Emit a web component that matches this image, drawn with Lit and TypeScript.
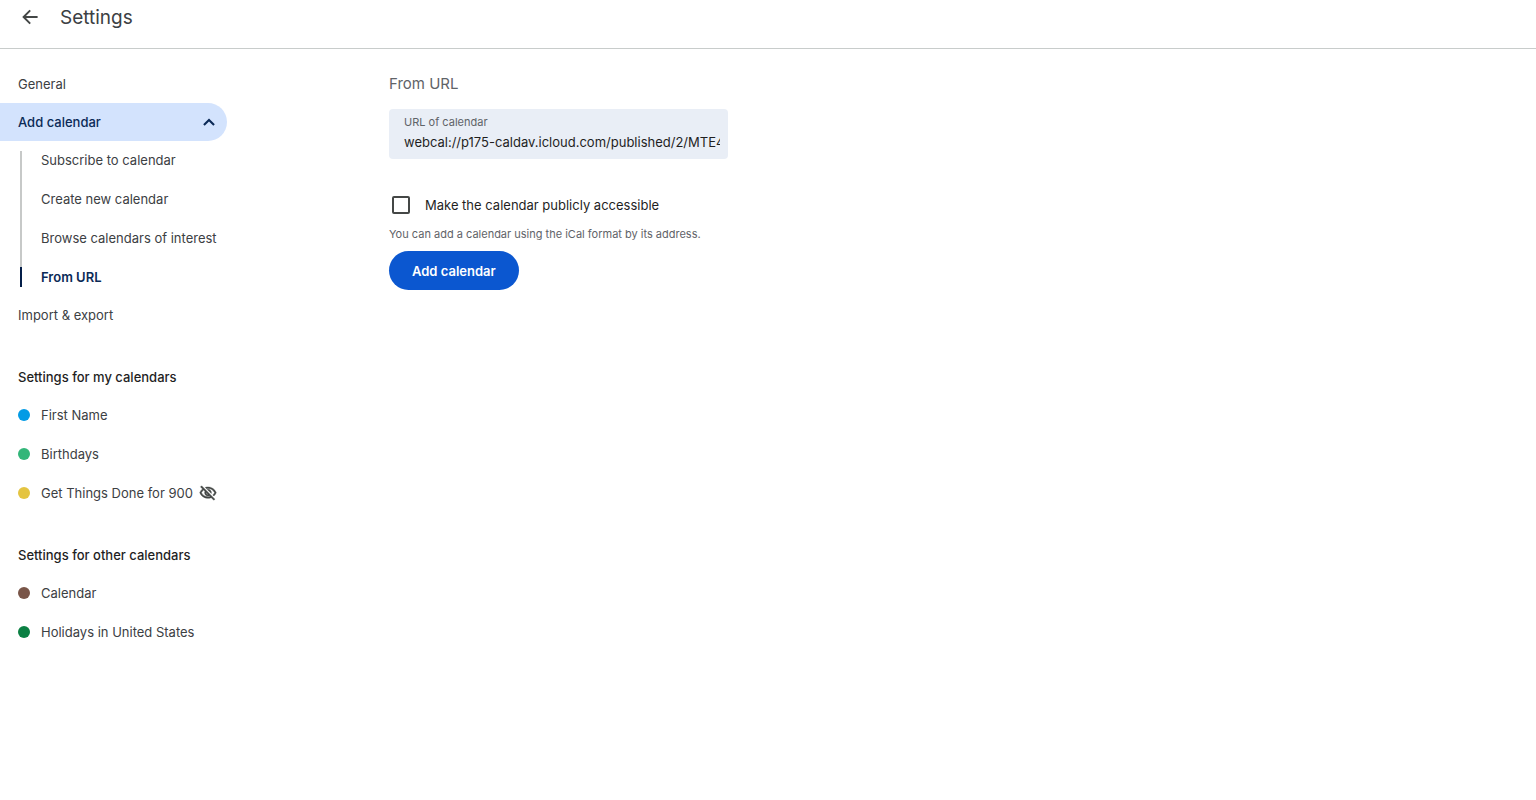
import { LitElement, html, css } from "lit";
import { customElement, state } from "lit/decorators.js";
import { classMap } from "lit/directives/class-map.js";

interface Calendar {
  name: string;
  color: string;
  hidden?: boolean;
}

const ADD_PAGES = ["Subscribe to calendar", "Create new calendar", "Browse calendars of interest", "From URL"];

const MY_CALENDARS: Calendar[] = [
  { name: "First Name", color: "#039be5" },
  { name: "Birthdays", color: "#33b679" },
  { name: "Get Things Done for 900", color: "#e4c441", hidden: true },
];

const OTHER_CALENDARS: Calendar[] = [
  { name: "Calendar", color: "#795548" },
  { name: "Holidays in United States", color: "#0b8043" },
];

@customElement("app-root")
export class AppRoot extends LitElement {
  static styles = css`
    :host {
      display: block;
      min-height: 100vh;
      background: #fff;
      color: #3c4043;
      font-family: Inter, Roboto, sans-serif;
      font-size: 13px;
      line-height: 20px;
    }
    * { box-sizing: border-box; }
    h1, h2, h3, p, ul { margin: 0; padding: 0; font-weight: 400; }
    ul { list-style: none; }
    a { color: inherit; text-decoration: none; }
    svg { display: block; flex: none; fill: currentColor; }

    .topbar {
      display: flex;
      align-items: center;
      gap: 20px;
      height: 49px;
      padding: 0 20px 12px;
      border-bottom: 1px solid #c8cccb;
      color: #3c4043;
    }
    .back {
      display: flex;
      padding: 0;
      border: 0;
      background: none;
      color: #444746;
      cursor: pointer;
    }
    .title { font-size: 19px; line-height: 24px; }

    .layout { display: flex; align-items: flex-start; }
    .side { flex: none; width: 389px; padding-top: 16px; }
    .row {
      display: flex;
      align-items: center;
      height: 38px;
      padding-left: 18px;
    }
    .group {
      width: 227px;
      padding-right: 11px;
      justify-content: space-between;
      border: 0;
      border-radius: 0 20px 20px 0;
      background: #d3e3fd;
      color: #0b2a57;
      font: inherit;
      font-weight: 500;
      cursor: pointer;
    }
    .pages { position: relative; }
    .rail {
      position: absolute;
      left: 20px;
      top: 10px;
      bottom: 10px;
      width: 2px;
      background: #c7c9c8;
    }
    .page { padding-left: 41px; position: relative; }
    .current { color: #0b2a57; font-weight: 600; }
    .current::before {
      content: "";
      position: absolute;
      left: 20px;
      top: 9px;
      bottom: 9px;
      width: 2px;
      background: #041e49;
    }
    .section { margin-top: 24px; }
    .heading { color: #1f1f1f; font-size: 13px; line-height: 20px; font-weight: 500; }
    .list { display: grid; gap: 1px; }
    .dot { width: 12px; height: 12px; margin-right: 11px; border-radius: 50%; flex: none; }
    .off { margin-left: 6px; color: #444746; stroke: currentColor; stroke-width: 0.6; }

    .content { flex: 1; min-width: 0; padding: 25px 16px 24px 0; }
    .subtitle { font-size: 15px; line-height: 20px; color: #5f6368; }
    .field {
      display: flex;
      flex-direction: column;
      width: 339px;
      max-width: 100%;
      height: 50px;
      margin-top: 15px;
      padding: 5px 8px 0 15px;
      border-radius: 4px;
      background: #e9eef6;
    }
    .label { font-size: 11px; line-height: 16px; color: #5f6368; }
    .url {
      width: 100%;
      height: 24px;
      padding: 0;
      border: 0;
      outline: 0;
      background: none;
      color: #1f1f1f;
      font: inherit;
    }
    .check {
      display: flex;
      align-items: center;
      width: max-content;
      gap: 15px;
      margin-top: 36px;
      padding-left: 3px;
      color: #1f1f1f;
    }
    .box {
      appearance: none;
      width: 18px;
      height: 18px;
      margin: 0;
      border: 2px solid #444746;
      border-radius: 2px;
    }
    .box:checked { background: #0b57d0; border-color: #0b57d0; }
    .hint { margin-top: 11px; font-size: 11px; line-height: 16px; color: #5f6368; }
    .add {
      height: 39px;
      margin-top: 9px;
      padding: 0 23px;
      border: 0;
      border-radius: 20px;
      background: #0b57d0;
      color: #fff;
      font: inherit;
      font-weight: 600;
      cursor: pointer;
    }
  `;

  @state() private open = true;
  @state() private page = "From URL";
  @state() private url = "webcal://p175-caldav.icloud.com/published/2/MTE4";

  private choose(e: Event, page: string) {
    e.preventDefault();
    this.page = page;
  }

  private calendarList(title: string, calendars: Calendar[]) {
    return html`
      <section class="section">
        <h3 class="row heading">${title}</h3>
        <ul class="list">
          ${calendars.map(
            (c) => html`<li>
              <a class="row" href="#">
                <span class="dot" style="background:${c.color}"></span>${c.name}
                ${c.hidden
                  ? html`<svg class="off" width="18" height="18" viewBox="0 0 24 24" aria-hidden="true">
                      <path d="M12 6c3.79 0 7.17 2.13 8.82 5.5-.59 1.22-1.42 2.27-2.41 3.12l1.41 1.41c1.39-1.23 2.49-2.77 3.18-4.53C21.27 7.11 17 4 12 4c-1.27 0-2.49.2-3.64.57l1.65 1.65C10.66 6.09 11.32 6 12 6zm-1.07 1.14L13 9.21c.57.25 1.03.71 1.28 1.28l2.07 2.07c.08-.34.14-.7.14-1.07C16.5 9.01 14.48 7 12 7c-.37 0-.72.05-1.07.14zM2.01 3.87l2.68 2.68C3.06 7.83 1.77 9.53 1 11.5 2.73 15.89 7 19 12 19c1.52 0 2.98-.29 4.32-.82l3.42 3.42 1.41-1.41L3.42 2.45 2.01 3.87zm7.5 7.5l2.61 2.61c-.04.01-.08.02-.12.02-1.38 0-2.5-1.12-2.5-2.5 0-.05.01-.08.01-.13zm-3.4-3.4l1.75 1.75c-.23.55-.36 1.15-.36 1.78 0 2.48 2.02 4.5 4.5 4.5.63 0 1.23-.13 1.77-.36l.98.98c-.88.24-1.8.38-2.75.38-3.79 0-7.17-2.13-8.82-5.5.7-1.43 1.72-2.61 2.93-3.53z" />
                    </svg>`
                  : ""}
              </a>
            </li>`
          )}
        </ul>
      </section>
    `;
  }

  render() {
    return html`
      <header class="topbar">
        <button class="back" aria-label="Back">
          <svg width="20" height="20" viewBox="0 0 20 20">
            <path d="M6 8h11.6v2H6l4.9 4.9-1.4 1.4L2.2 9l7.3-7.3 1.4 1.4z" />
          </svg>
        </button>
        <h1 class="title">Settings</h1>
      </header>
      <div class="layout">
        <nav class="side">
          <a class="row" href="#">General</a>
          <button class="row group" aria-expanded=${this.open} @click=${() => (this.open = !this.open)}>
            Add calendar
            <svg width="14" height="14" viewBox="0 0 14 14">
              <path d="M1.2 9.3 7 3.5l5.8 5.8-1.5 1.5L7 6.5l-4.3 4.3z" />
            </svg>
          </button>
          ${this.open
            ? html`<div class="pages">
                <div class="rail"></div>
                <ul class="list">
                  ${ADD_PAGES.map(
                    (p) => html`<li>
                      <a
                        class=${classMap({ row: true, page: true, current: p === this.page })}
                        href="#"
                        @click=${(e: Event) => this.choose(e, p)}
                        >${p}</a
                      >
                    </li>`
                  )}
                </ul>
              </div>`
            : ""}
          <a class="row" href="#">Import &amp; export</a>
          ${this.calendarList("Settings for my calendars", MY_CALENDARS)}
          ${this.calendarList("Settings for other calendars", OTHER_CALENDARS)}
        </nav>
        <main class="content">
          <h2 class="subtitle">From URL</h2>
          <div class="field">
            <label class="label" for="url">URL of calendar</label>
            <input class="url" id="url" type="text" .value=${this.url} />
          </div>
          <label class="check">
            <input class="box" type="checkbox" />
            Make the calendar publicly accessible
          </label>
          <p class="hint">You can add a calendar using the iCal format by its address.</p>
          <button class="add">Add calendar</button>
        </main>
      </div>
    `;
  }
}
